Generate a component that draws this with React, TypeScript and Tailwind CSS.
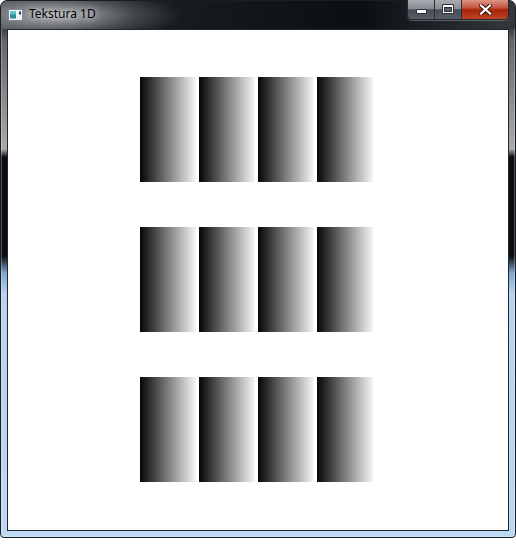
import React from "react"

const rows = [0, 1, 2]
const cols = [0, 1, 2, 3]

function AppIcon() {
  return (
    <svg width="15" height="12" viewBox="0 0 15 12">
      <rect x="0.5" y="0.5" width="14" height="11" fill="#f2f4f6" stroke="#7d8790" />
      <rect x="2" y="2.5" width="6" height="7" fill="#2f8f8c" />
      <rect x="2" y="2.5" width="6" height="3" fill="#5cc0c8" />
      <rect x="11" y="2.5" width="2" height="3" fill="#1d3c6a" />
    </svg>
  )
}

function CaptionButtons() {
  return (
    <div className="flex h-[20px] -mt-px mr-[6px] rounded-b-[5px] border border-t-0 border-[#25282c] overflow-hidden shadow-[0_1px_0_rgba(255,255,255,0.25)]">
      {/* minimise */}
      <div className="w-[27px] h-full flex items-end justify-center pb-[5px] border-r border-[#2b2e33] bg-[linear-gradient(to_bottom,#a9adb3,#878d94_45%,#464c55_52%,#575e68)]">
        <div className="w-[11px] h-[5px] bg-white border border-[#2a2d31] rounded-[1px]" />
      </div>
      {/* maximise */}
      <div className="w-[27px] h-full flex items-center justify-center pb-[1px] border-r border-[#2b2e33] bg-[linear-gradient(to_bottom,#a9adb3,#878d94_45%,#464c55_52%,#575e68)]">
        <div className="w-[12px] h-[10px] border border-[#2a2d31] rounded-[1px] bg-white p-[1px] pt-[2px]">
          <div className="w-full h-full bg-[#5a6068] border border-[#2a2d31]" />
        </div>
      </div>
      {/* close */}
      <div className="w-[46px] h-full flex items-center justify-center bg-[linear-gradient(to_bottom,#dc9584,#c65540_40%,#a8240b_52%,#bf4327)]">
        <svg width="13" height="11" viewBox="0 0 13 11">
          <path d="M2 1.5 L11 9.5 M11 1.5 L2 9.5" stroke="#3a1208" strokeWidth="4.2" strokeLinecap="square" />
          <path d="M2 1.5 L11 9.5 M11 1.5 L2 9.5" stroke="#ffffff" strokeWidth="2.2" strokeLinecap="square" />
        </svg>
      </div>
    </div>
  )
}

export default function App() {
  return (
    <div className="w-[516px] h-[544px] bg-white font-['Noto_Sans','Open_Sans',sans-serif]">
      <div className="w-[516px] h-[538px] flex flex-col rounded-t-[7px] rounded-b-[4px] border border-[#1a1d21] shadow-[inset_0_0_0_1px_rgba(255,255,255,0.28)] bg-[linear-gradient(to_bottom,#2c2f33_0px,#3c3f43_28px,#63676b_40px,#a8abae_148px,#0a0d11_156px,#0a0d11_255px,#7ea7d0_272px,#b7d3ef_292px,#bcd8f2_100%)]">
        {/* title bar */}
        <div className="h-[28px] flex items-start rounded-t-[6px] bg-[radial-gradient(ellipse_125px_26px_at_56px_14px,rgba(190,193,196,0.88),rgba(150,153,156,0.35)_60%,rgba(150,153,156,0)),linear-gradient(to_right,#4a4d51,#1a1d21_26%,#0b0e12_70%,#35383c)]">
          <div className="ml-[7px] mt-[8px]">
            <AppIcon />
          </div>
          <div className="ml-[6px] mt-[5px] text-[12px] leading-[16px] text-black [text-shadow:0_0_6px_rgba(255,255,255,0.9)]">
            Tekstura 1D
          </div>
          <div className="flex-1" />
          <CaptionButtons />
        </div>

        {/* client area */}
        <div className="mx-[6px] w-[502px] h-[502px] border border-[#23272c] bg-white flex flex-col gap-[45px] pt-[47px] pl-[132px]">
          {rows.map((r) => (
            <div key={r} className="flex gap-[3px]">
              {cols.map((c) => (
                <div
                  key={c}
                  className="w-[56px] h-[105px] bg-[linear-gradient(to_right,#050505,#f6f6f6)]"
                />
              ))}
            </div>
          ))}
        </div>
      </div>
    </div>
  )
}
